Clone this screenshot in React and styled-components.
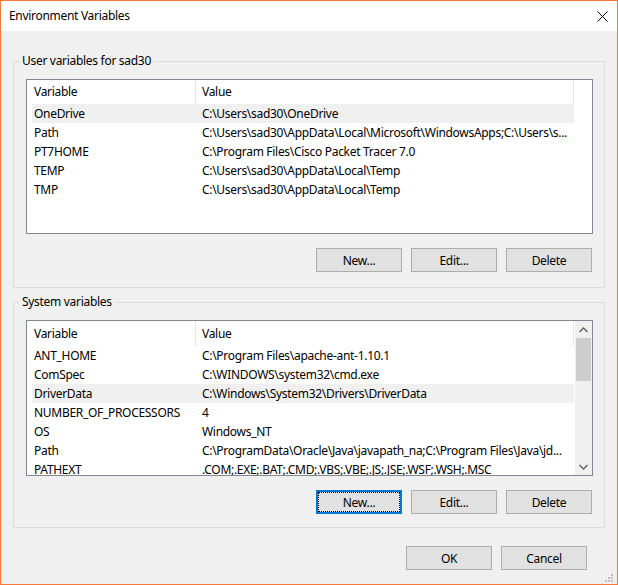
import React from "react";
import styled, { createGlobalStyle, css } from "styled-components";

const GlobalStyle = createGlobalStyle`
  html, body {
    margin: 0;
    padding: 0;
    background: #f0f0f0;
  }
  body {
    font-family: "Noto Sans", "Liberation Sans", sans-serif;
    font-size: 12px;
    letter-spacing: -0.3px;
    color: #000;
  }
`;

const Window = styled.div`
  position: relative;
  width: 618px;
  height: 585px;
  box-sizing: border-box;
  border: 1px solid #f3783a;
  background: #f0f0f0;
  display: flex;
  flex-direction: column;
`;

const TitleBar = styled.div`
  height: 30px;
  flex-shrink: 0;
  background: #fff;
  display: flex;
  align-items: center;
  justify-content: space-between;
  padding: 0 9px 0 8px;
`;

const Title = styled.span`
  font-size: 12px;
  line-height: 16px;
`;

const Content = styled.div`
  padding: 22px 12px 0 12px;
  display: flex;
  flex-direction: column;
`;

const Group = styled.fieldset`
  margin: ${(p) => p.$top}px 0 0 0;
  border: 1px solid #dcdcdc;
  padding: 10px 11px ${(p) => p.$bottom}px 12px;
  min-width: 0;
  display: flex;
  flex-direction: column;
`;

const Legend = styled.legend`
  padding: 0 3px;
  margin-left: -7px;
  line-height: 16px;
  font-size: 12px;
`;

const ListBox = styled.div`
  height: ${(p) => p.$height}px;
  box-sizing: border-box;
  border: 1px solid #828790;
  background: #fff;
  display: flex;
  overflow: hidden;
`;

const ListBody = styled.div`
  flex: 1;
  min-width: 0;
  padding-left: 5px;
  overflow: hidden;
`;

const Header = styled.div`
  display: flex;
  height: ${(p) => p.$height}px;
`;

const HeadCell = styled.div`
  width: ${(p) => p.$w}px;
  flex-shrink: 0;
  box-sizing: border-box;
  padding: 0 0 1px ${(p) => p.$pad}px;
  border-right: 1px solid #e5e5e5;
  display: flex;
  align-items: center;
  white-space: nowrap;
`;

const Row = styled.div`
  display: flex;
  height: 19px;
  width: 542px;
  background: ${(p) => (p.$selected ? "#f0f0f0" : "transparent")};
`;

const Cell = styled.div`
  width: ${(p) => p.$w}px;
  flex-shrink: 0;
  box-sizing: border-box;
  padding-left: ${(p) => p.$pad}px;
  display: flex;
  align-items: center;
  white-space: nowrap;
  overflow: hidden;
`;

const ScrollBar = styled.div`
  width: 17px;
  flex-shrink: 0;
  background: #f0f0f0;
  display: flex;
  flex-direction: column;
`;

const ScrollArrow = styled.div`
  height: 17px;
  display: flex;
  align-items: center;
  justify-content: center;
`;

const Track = styled.div`
  flex: 1;
  display: flex;
  justify-content: center;
`;

const Thumb = styled.div`
  width: 15px;
  height: 43px;
  background: #cdcdcd;
`;

const ButtonRow = styled.div`
  display: flex;
  justify-content: flex-end;
  gap: 9px;
  margin-top: ${(p) => p.$top}px;
  padding-right: ${(p) => p.$right}px;
`;

const Button = styled.button`
  width: 86px;
  height: 24px;
  box-sizing: border-box;
  padding: 0;
  border: 1px solid #adadad;
  background: #e1e1e1;
  font: inherit;
  font-size: 12px;
  letter-spacing: inherit;
  color: #000;
  ${(p) =>
    p.$focused &&
    css`
      border: 2px solid #0078d7;
      outline: 1px dotted #000;
      outline-offset: -3px;
    `}
`;

const Grip = styled.svg`
  position: absolute;
  right: 4px;
  bottom: 2px;
`;

const userVars = [
  ["OneDrive", "C:\\Users\\sad30\\OneDrive", true],
  ["Path", "C:\\Users\\sad30\\AppData\\Local\\Microsoft\\WindowsApps;C:\\Users\\s..."],
  ["PT7HOME", "C:\\Program Files\\Cisco Packet Tracer 7.0"],
  ["TEMP", "C:\\Users\\sad30\\AppData\\Local\\Temp"],
  ["TMP", "C:\\Users\\sad30\\AppData\\Local\\Temp"],
];

const systemVars = [
  ["ANT_HOME", "C:\\Program Files\\apache-ant-1.10.1"],
  ["ComSpec", "C:\\WINDOWS\\system32\\cmd.exe"],
  ["DriverData", "C:\\Windows\\System32\\Drivers\\DriverData", true],
  ["NUMBER_OF_PROCESSORS", "4"],
  ["OS", "Windows_NT"],
  ["Path", "C:\\ProgramData\\Oracle\\Java\\javapath_na;C:\\Program Files\\Java\\jd..."],
  ["PATHEXT", ".COM;.EXE;.BAT;.CMD;.VBS;.VBE;.JS;.JSE;.WSF;.WSH;.MSC"],
];

const CloseIcon = () => (
  <svg width="11" height="11" viewBox="0 0 11 11">
    <path d="M0.5 0.5 L10.5 10.5 M10.5 0.5 L0.5 10.5" stroke="#000" strokeWidth="1" fill="none" />
  </svg>
);

const Chevron = ({ up }) => (
  <svg width="9" height="6" viewBox="0 0 9 6">
    <path
      d={up ? "M0.5 5 L4.5 1 L8.5 5" : "M0.5 1 L4.5 5 L8.5 1"}
      stroke="#606060"
      strokeWidth="1.3"
      fill="none"
    />
  </svg>
);

const VarList = ({ rows, height, headerHeight, scroll }) => (
  <ListBox $height={height}>
    <ListBody>
      <Header $height={headerHeight}>
        <HeadCell $w={164} $pad={2}>Variable</HeadCell>
        <HeadCell $w={378} $pad={6}>Value</HeadCell>
      </Header>
      {rows.map(([name, value, selected]) => (
        <Row key={name} $selected={selected}>
          <Cell $w={164} $pad={2}>{name}</Cell>
          <Cell $w={378} $pad={6}>{value}</Cell>
        </Row>
      ))}
    </ListBody>
    {scroll && (
      <ScrollBar>
        <ScrollArrow>
          <Chevron up />
        </ScrollArrow>
        <Track>
          <Thumb />
        </Track>
        <ScrollArrow>
          <Chevron />
        </ScrollArrow>
      </ScrollBar>
    )}
  </ListBox>
);

const App = () => {
  return (
    <>
      <GlobalStyle />
      <Window>
        <TitleBar>
          <Title>Environment Variables</Title>
          <CloseIcon />
        </TitleBar>
        <Content>
          <Group $top={0} $bottom={15}>
            <Legend>User variables for sad30</Legend>
            <VarList rows={userVars} height={155} headerHeight={24} />
            <ButtonRow $top={14} $right={1}>
              <Button>New...</Button>
              <Button>Edit...</Button>
              <Button>Delete</Button>
            </ButtonRow>
          </Group>
          <Group $top={6} $bottom={13}>
            <Legend>System variables</Legend>
            <VarList rows={systemVars} height={156} headerHeight={25} scroll />
            <ButtonRow $top={14} $right={1}>
              <Button $focused>New...</Button>
              <Button>Edit...</Button>
              <Button>Delete</Button>
            </ButtonRow>
          </Group>
          <ButtonRow $top={18} $right={18}>
            <Button>OK</Button>
            <Button>Cancel</Button>
          </ButtonRow>
        </Content>
        <Grip width="8" height="8" viewBox="0 0 8 8">
          <rect x="6" y="0" width="2" height="2" fill="#bcbcbc" />
          <rect x="3" y="3" width="2" height="2" fill="#bcbcbc" />
          <rect x="6" y="3" width="2" height="2" fill="#bcbcbc" />
          <rect x="0" y="6" width="2" height="2" fill="#bcbcbc" />
          <rect x="3" y="6" width="2" height="2" fill="#bcbcbc" />
          <rect x="6" y="6" width="2" height="2" fill="#bcbcbc" />
        </Grip>
      </Window>
    </>
  );
};

export default App;
